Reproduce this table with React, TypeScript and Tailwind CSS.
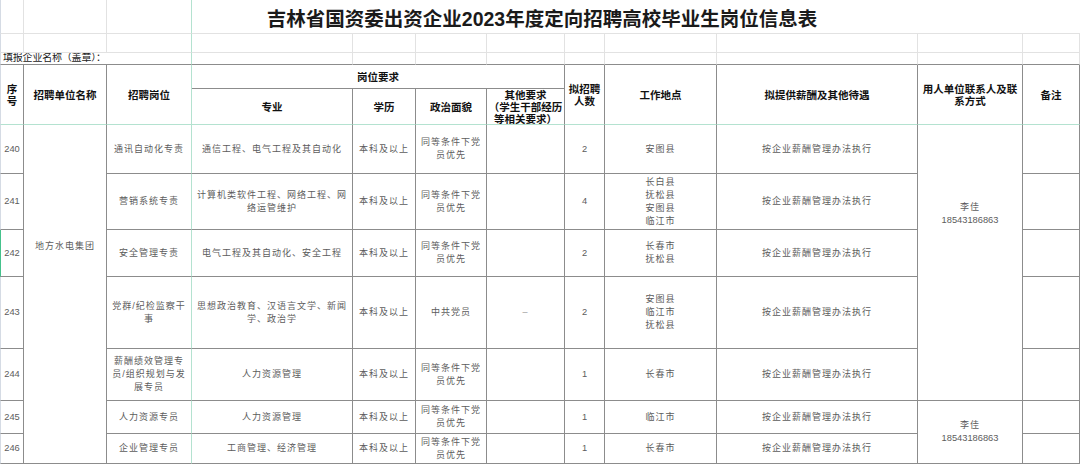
import clsx from "clsx";
import { Fragment, ReactNode } from "react";

type Edge = "dark" | "light" | "green" | "none";

const RIGHT: Record<Edge, string> = {
  dark: "border-r border-r-[#8c8c8c]",
  light: "border-r border-r-[#e2e2e2]",
  green: "border-r border-r-[#b4e2d0]",
  none: "",
};

const BOTTOM: Record<Edge, string> = {
  dark: "border-b border-b-[#8c8c8c]",
  light: "border-b border-b-[#e2e2e2]",
  green: "border-b border-b-[#b4e2d0]",
  none: "",
};

interface CellProps {
  r?: Edge;
  b?: Edge;
  className?: string;
  children?: ReactNode;
}

const Cell = ({ r = "dark", b = "dark", className, children }: CellProps) => (
  <div
    className={clsx(
      "flex min-w-0 flex-col items-center justify-center whitespace-nowrap text-center",
      RIGHT[r],
      BOTTOM[b],
      className
    )}
  >
    {children}
  </div>
);

const Lines = ({ lines }: { lines: string[] }) => (
  <>
    {lines.map((line, i) => (
      <div key={i}>{line}</div>
    ))}
  </>
);

interface Job {
  no: string;
  post: string[];
  major: string[];
  politics: string[];
  other: string;
  count: string;
  place: string[];
}

const PARTY = ["同等条件下党", "员优先"];

const jobs: Job[] = [
  { no: "240", post: ["通讯自动化专责"], major: ["通信工程、电气工程及其自动化"], politics: PARTY, other: "", count: "2", place: ["安图县"] },
  { no: "241", post: ["营销系统专责"], major: ["计算机类软件工程、网络工程、网", "络运管维护"], politics: PARTY, other: "", count: "4", place: ["长白县", "抚松县", "安图县", "临江市"] },
  { no: "242", post: ["安全管理专责"], major: ["电气工程及其自动化、安全工程"], politics: PARTY, other: "", count: "2", place: ["长春市", "抚松县"] },
  { no: "243", post: ["党群/纪检监察干", "事"], major: ["思想政治教育、汉语言文学、新闻", "学、政治学"], politics: ["中共党员"], other: "–", count: "2", place: ["安图县", "临江市", "抚松县"] },
  { no: "244", post: ["薪酬绩效管理专", "员/组织规划与发", "展专员"], major: ["人力资源管理"], politics: PARTY, other: "", count: "1", place: ["长春市"] },
  { no: "245", post: ["人力资源专员"], major: ["人力资源管理"], politics: PARTY, other: "", count: "1", place: ["临江市"] },
  { no: "246", post: ["企业管理专员"], major: ["工商管理、经济管理"], politics: PARTY, other: "", count: "1", place: ["长春市"] },
];

// data text: thin gray cjk with wide spacing, numbers in an arial-width face
const txt = "text-[9px] leading-[13px] tracking-[1px] text-[#5c5c5c]";
const num = "text-[9.3px] leading-[13px] text-[#5c5c5c]";
const head = "text-[10.5px] leading-[12px] font-bold text-[#111]";

const App = () => {
  return (
    <div className="h-[464px] w-[1080px] overflow-hidden bg-white font-['Liberation_Sans','Noto_Sans_CJK_SC',sans-serif]">
      <div className="grid grid-cols-[24px_83px_85px_161px_63px_71px_78px_40px_112px_201px_105px_57px] grid-rows-[34px_19px_12px_24px_36px_49px_56px_47px_72px_52px_33px_30px]">
        {/* title row */}
        <Cell r="light" b="light" className="border-l border-l-[#d5dbe4]" />
        <Cell r="light" b="light" />
        <Cell r="green" b="light" />
        <Cell r="none" b="light" className="col-span-9 pr-[188px] pt-[6px] text-[19.5px] font-bold text-[#1a1a1a]">
          吉林省国资委出资企业2023年度定向招聘高校毕业生岗位信息表
        </Cell>

        {/* blank row */}
        {Array.from({ length: 12 }).map((_, i) => (
          <Cell
            key={i}
            r={i === 2 ? "green" : "light"}
            b="light"
            className={i === 0 ? "border-l border-l-[#d5dbe4]" : undefined}
          />
        ))}

        {/* filler row */}
        <Cell r="green" className="col-span-3 items-start justify-end overflow-hidden border-l border-l-[#d5dbe4] pl-[2px] text-[10px] leading-[12px] tracking-[-0.2px] text-[#222]">
          填报企业名称（盖章）：
        </Cell>
        {Array.from({ length: 9 }).map((_, i) => (
          <Cell key={i} r="light" />
        ))}

        {/* header */}
        <Cell b="green" className={clsx("row-span-2 border-l border-l-[#d5dbe4]", head)}>
          <Lines lines={["序", "号"]} />
        </Cell>
        <Cell b="green" className={clsx("row-span-2", head)}>招聘单位名称</Cell>
        <Cell r="green" b="green" className={clsx("row-span-2", head)}>招聘岗位</Cell>
        <Cell className={clsx("col-span-4", head)}>岗位要求</Cell>
        <Cell b="green" className={clsx("row-span-2", head)}>
          <Lines lines={["拟招聘", "人数"]} />
        </Cell>
        <Cell b="green" className={clsx("row-span-2", head)}>工作地点</Cell>
        <Cell b="green" className={clsx("row-span-2", head)}>拟提供薪酬及其他待遇</Cell>
        <Cell b="green" className={clsx("row-span-2", head)}>
          <Lines lines={["用人单位联系人及联", "系方式"]} />
        </Cell>
        <Cell b="green" className={clsx("row-span-2", head)}>备注</Cell>
        <Cell b="green" className={head}>专业</Cell>
        <Cell b="green" className={head}>学历</Cell>
        <Cell b="green" className={head}>政治面貌</Cell>
        <Cell b="green" className={head}>
          <Lines lines={["其他要求", "（学生干部经历", "等相关要求）"]} />
        </Cell>

        {/* data rows */}
        {jobs.map((job, i) => (
          <Fragment key={job.no}>
            <Cell
              className={clsx(
                num,
                i === 2 ? "border-l border-l-[#45c28c]" : "border-l border-l-[#d5dbe4]"
              )}
            >
              {job.no}
            </Cell>
            {i === 0 && (
              <Cell className={clsx("row-span-7 justify-start pt-[115px]", txt)}>地方水电集团</Cell>
            )}
            <Cell r="green" className={txt}>
              <Lines lines={job.post} />
            </Cell>
            <Cell className={txt}>
              <Lines lines={job.major} />
            </Cell>
            <Cell className={txt}>本科及以上</Cell>
            <Cell className={txt}>
              <Lines lines={job.politics} />
            </Cell>
            <Cell className={clsx(txt, "text-[#9a9a9a]")}>{job.other}</Cell>
            <Cell className={num}>{job.count}</Cell>
            <Cell className={txt}>
              <Lines lines={job.place} />
            </Cell>
            <Cell className={txt}>按企业薪酬管理办法执行</Cell>
            {i === 0 && (
              <Cell className="row-span-5 justify-start pt-[76px]">
                <div className={txt}>李佳</div>
                <div className={num}>18543186863</div>
              </Cell>
            )}
            {i === 5 && (
              <Cell className="row-span-2 justify-start pt-[18px]">
                <div className={txt}>李佳</div>
                <div className={num}>18543186863</div>
              </Cell>
            )}
            <Cell />
          </Fragment>
        ))}
      </div>
    </div>
  );
};

export default App;
